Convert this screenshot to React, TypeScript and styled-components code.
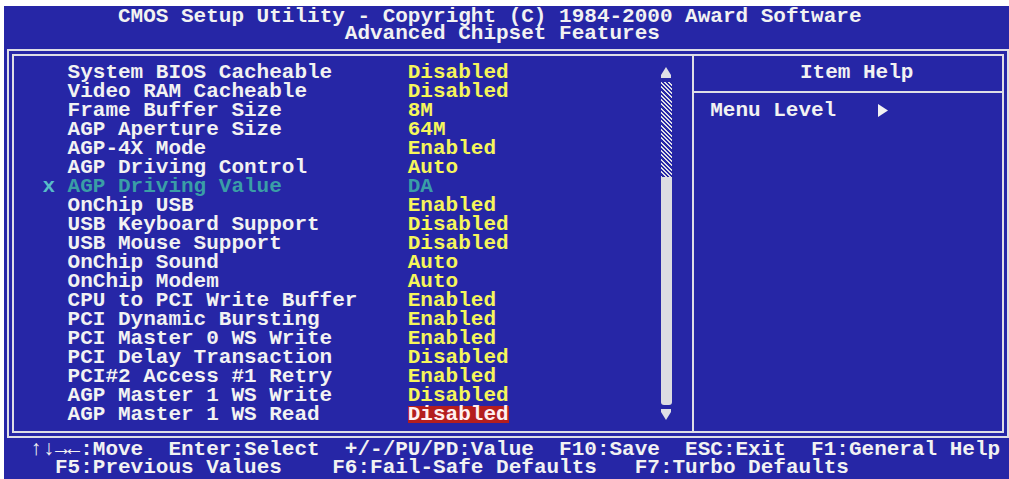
import React from 'react';
import styled, { createGlobalStyle } from 'styled-components';

// text-mode grid: one cell is 12.6px wide, one row 19px high
const CELL = 12.6;
const ROW = 19;

const BLUE = '#2626a6';
const LINE = '#dedee6';
const WHITE = '#f2f2f2';
const YELLOW = '#f6f65a';
const TEAL = '#3a9ea6';

const GlobalStyle = createGlobalStyle`
  body {
    margin: 0;
    background: #ffffff;
  }
`;

const Screen = styled.div`
  margin: 6px 0 0 4px;
  width: 1005px;
  height: 473px;
  overflow: hidden;
  background: ${BLUE};
  color: ${WHITE};
  font-family: "Liberation Mono", "DejaVu Sans Mono", monospace;
  font-size: 21px;
  font-weight: 700;
`;

const TitleBlock = styled.div`
  padding-top: 2px;
`;

const TextLine = styled.div<{ $col: number; $height?: number }>`
  height: ${(p) => p.$height ?? ROW}px;
  line-height: ${(p) => p.$height ?? ROW}px;
  white-space: pre;
  padding-left: ${(p) => 0.6 + p.$col * CELL}px;
`;

const Frame = styled.div`
  margin: 7px 0 0 3px;
  width: 1002px;
  height: 389px;
  box-sizing: border-box;
  border: 7px double ${LINE};
  display: flex;
`;

const ListPanel = styled.div`
  width: 678px;
  box-sizing: border-box;
  padding: 7px 19.4px 7px 28.4px;
  display: flex;
`;

const ItemList = styled.div`
  flex: 1;
  display: flex;
  flex-direction: column;
`;

type ItemState = 'normal' | 'disabled' | 'selected';

const ItemRow = styled.div`
  height: ${ROW}px;
  line-height: ${ROW}px;
  display: flex;
  align-items: center;
  white-space: pre;
`;

const Marker = styled.span`
  width: ${CELL * 2}px;
  color: #58bcc8;
`;

const Label = styled.span<{ $state: ItemState }>`
  width: ${CELL * 27}px;
  color: ${(p) => (p.$state === 'disabled' ? TEAL : WHITE)};
`;

const Value = styled.span<{ $state: ItemState }>`
  height: 17px;
  line-height: 17px;
  color: ${(p) =>
    p.$state === 'disabled' ? TEAL : p.$state === 'selected' ? '#fff0f0' : YELLOW};
  background: ${(p) => (p.$state === 'selected' ? '#b41e1e' : 'transparent')};
`;

const ScrollTrack = styled.div`
  width: ${CELL}px;
  display: flex;
  flex-direction: column;
  align-items: center;
`;

const ScrollArrow = styled.div`
  height: ${ROW}px;
  display: flex;
  align-items: center;
  justify-content: center;
`;

const ScrollHatch = styled.div`
  width: 11px;
  height: ${ROW * 5}px;
  background: repeating-linear-gradient(45deg, ${LINE} 0 1.4px, ${BLUE} 1.4px 3px);
`;

const ScrollThumb = styled.div`
  width: 11px;
  height: ${ROW * 12}px;
  background: #dcdce2;
  border-radius: 0 0 3px 3px;
`;

const Divider = styled.div`
  width: 2px;
  background: ${LINE};
`;

const HelpPanel = styled.div`
  flex: 1;
  padding-top: 7px;
  display: flex;
  flex-direction: column;
`;

const HelpLine = styled.div<{ $indent: number }>`
  height: ${ROW}px;
  line-height: ${ROW}px;
  white-space: pre;
  padding-left: ${(p) => p.$indent}px;
  display: flex;
  align-items: center;
`;

const HelpRule = styled.div`
  height: 2px;
  margin: 8.5px 0;
  background: ${LINE};
`;

const Pointer = styled.svg`
  margin-left: ${CELL * 3 + 4}px;
`;

const Footer = styled.div`
  margin-top: 3px;
`;

const items: { label: string; value: string; state: ItemState }[] = [
  { label: 'System BIOS Cacheable', value: 'Disabled', state: 'normal' },
  { label: 'Video RAM Cacheable', value: 'Disabled', state: 'normal' },
  { label: 'Frame Buffer Size', value: '8M', state: 'normal' },
  { label: 'AGP Aperture Size', value: '64M', state: 'normal' },
  { label: 'AGP-4X Mode', value: 'Enabled', state: 'normal' },
  { label: 'AGP Driving Control', value: 'Auto', state: 'normal' },
  { label: 'AGP Driving Value', value: 'DA', state: 'disabled' },
  { label: 'OnChip USB', value: 'Enabled', state: 'normal' },
  { label: 'USB Keyboard Support', value: 'Disabled', state: 'normal' },
  { label: 'USB Mouse Support', value: 'Disabled', state: 'normal' },
  { label: 'OnChip Sound', value: 'Auto', state: 'normal' },
  { label: 'OnChip Modem', value: 'Auto', state: 'normal' },
  { label: 'CPU to PCI Write Buffer', value: 'Enabled', state: 'normal' },
  { label: 'PCI Dynamic Bursting', value: 'Enabled', state: 'normal' },
  { label: 'PCI Master 0 WS Write', value: 'Enabled', state: 'normal' },
  { label: 'PCI Delay Transaction', value: 'Disabled', state: 'normal' },
  { label: 'PCI#2 Access #1 Retry', value: 'Enabled', state: 'normal' },
  { label: 'AGP Master 1 WS Write', value: 'Disabled', state: 'normal' },
  { label: 'AGP Master 1 WS Read', value: 'Disabled', state: 'selected' },
];

const UpArrow = () => (
  <svg width="12" height="19" viewBox="0 0 12 19">
    <polygon points="6,4 11,12 1,12" fill={LINE} />
    <rect x="1" y="12" width="10" height="3" fill={LINE} />
  </svg>
);

const DownArrow = () => (
  <svg width="12" height="19" viewBox="0 0 12 19">
    <rect x="1" y="4" width="10" height="3" fill={LINE} />
    <polygon points="1,7 11,7 6,15" fill={LINE} />
  </svg>
);

const App: React.FC = () => (
  <>
    <GlobalStyle />
    <Screen>
      <TitleBlock>
        <TextLine $col={9} $height={17}>
          CMOS Setup Utility - Copyright (C) 1984-2000 Award Software
        </TextLine>
        <TextLine $col={27} $height={17}>
          Advanced Chipset Features
        </TextLine>
      </TitleBlock>

      <Frame>
        <ListPanel>
          <ItemList>
            {items.map((item) => (
              <ItemRow key={item.label}>
                <Marker>{item.state === 'disabled' ? 'x' : ' '}</Marker>
                <Label $state={item.state}>{item.label}</Label>
                <Value $state={item.state}>{item.value}</Value>
              </ItemRow>
            ))}
          </ItemList>
          <ScrollTrack>
            <ScrollArrow>
              <UpArrow />
            </ScrollArrow>
            <ScrollHatch />
            <ScrollThumb />
            <ScrollArrow>
              <DownArrow />
            </ScrollArrow>
          </ScrollTrack>
        </ListPanel>
        <Divider />
        <HelpPanel>
          <HelpLine $indent={106}>Item Help</HelpLine>
          <HelpRule />
          <HelpLine $indent={16.2}>
            Menu Level
            <Pointer width="10" height="13" viewBox="0 0 10 13">
              <polygon points="0,0 10,6.5 0,13" fill={WHITE} />
            </Pointer>
          </HelpLine>
        </HelpPanel>
      </Frame>

      <Footer>
        <TextLine $col={2} $height={18}>
          ↑↓→←:Move  Enter:Select  +/-/PU/PD:Value  F10:Save  ESC:Exit  F1:General Help
        </TextLine>
        <TextLine $col={4} $height={18}>
          F5:Previous Values    F6:Fail-Safe Defaults   F7:Turbo Defaults
        </TextLine>
      </Footer>
    </Screen>
  </>
);

export default App;
